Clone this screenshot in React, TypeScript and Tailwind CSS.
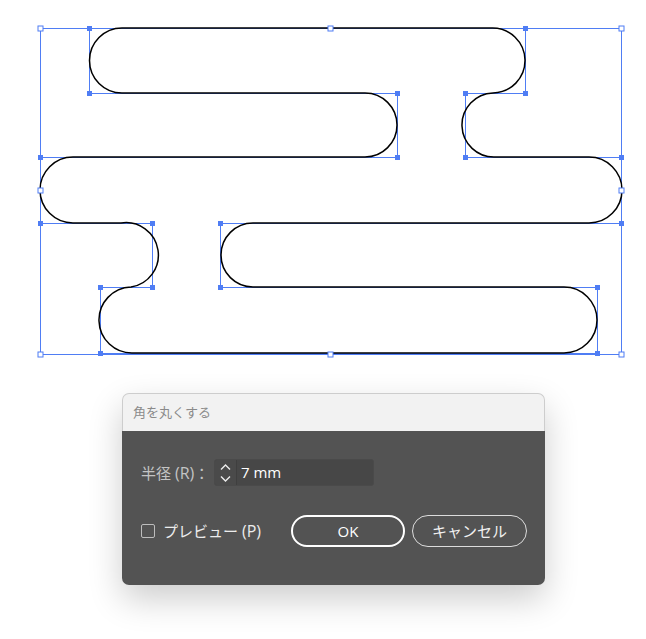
import React from 'react';

const BLUE = '#4f7df4';

// anchor points of the selected path (before the corners were rounded)
const anchors: [number, number][] = [
  [89, 28], [525, 28], [525, 93], [465, 93], [465, 157], [621, 157], [621, 223],
  [220, 223], [220, 287], [597, 287], [597, 353], [100, 353], [100, 287],
  [152, 287], [152, 223], [40, 223], [40, 157], [397, 157], [397, 93], [89, 93],
];

// bounding box handles
const boxHandles: [number, number][] = [
  [40, 28], [330, 28], [621, 28], [40, 190], [621, 190], [40, 354], [330, 354], [621, 354],
];

const roundedPath = [
  'M 122 28 L 492 28',
  'A 32.5 32.5 0 0 1 493 93',
  'A 32 32 0 0 0 495 157',
  'L 589 157 A 33 33 0 0 1 589 223',
  'L 253 223 A 32 32 0 0 0 253 287',
  'L 564 287 A 33 33 0 0 1 564 353',
  'L 133 353 A 33 33 0 0 1 131 287',
  'A 32 32 0 0 0 121 223',
  'L 73 223 A 33 33 0 0 1 73 157',
  'L 365 157 A 32 32 0 0 0 365 93',
  'L 122 93 A 32.5 32.5 0 0 1 122 28 Z',
].join(' ');

const Artwork = () => (
  <svg width="646" height="393" viewBox="0 0 646 393" className="block">
    <rect x="40.5" y="28.5" width="581" height="326" fill="none" stroke={BLUE} strokeWidth="1" />
    <polygon
      points={anchors.map(([x, y]) => `${x + 0.5},${y + 0.5}`).join(' ')}
      fill="none"
      stroke={BLUE}
      strokeWidth="1"
    />
    <path d={roundedPath} fill="none" stroke="#000" strokeWidth="1.5" />
    {anchors.map(([x, y], i) => (
      <rect key={'a' + i} x={x - 2} y={y - 2} width="5" height="5" fill={BLUE} />
    ))}
    {boxHandles.map(([x, y], i) => (
      <rect key={'b' + i} x={x - 2} y={y - 2} width="5" height="5" fill="#fff" stroke={BLUE} strokeWidth="1" />
    ))}
  </svg>
);

const Spinner = () => (
  <div className="flex h-full w-[22px] flex-col items-center justify-center gap-[6px] border-r border-[#3f3f3f] bg-[#4a4a4a]">
    <svg width="11" height="6" viewBox="0 0 11 6">
      <path d="M1 5.5 L5.5 1 L10 5.5" fill="none" stroke="#ececec" strokeWidth="1.4" />
    </svg>
    <svg width="11" height="6" viewBox="0 0 11 6">
      <path d="M1 0.5 L5.5 5 L10 0.5" fill="none" stroke="#ececec" strokeWidth="1.4" />
    </svg>
  </div>
);

export default function App() {
  return (
    <div
      className="h-[639px] w-[646px] overflow-hidden bg-white"
      style={{ fontFamily: '"Open Sans", "Noto Sans CJK JP", sans-serif' }}
    >
      <Artwork />

      <div className="ml-[122px] w-[423px] rounded-[7px] shadow-[0_14px_34px_rgba(0,0,0,0.2)]">
        {/* title bar */}
        <div className="flex h-[38px] items-center rounded-t-[7px] border border-b-0 border-[#cdcdcd] bg-[#f2f2f2] pl-[10px] text-[13px] text-[#8a8a8a]">
          角を丸くする
        </div>

        {/* body */}
        <div className="h-[154px] rounded-b-[7px] bg-[#535353] pl-[19px] pr-[18px] pt-[28px]">
          <div className="flex items-center">
            <span className="w-[73px] whitespace-nowrap text-[15px] text-[#c4c4c4]">
              半径 <span className="text-[16px]">(R)</span>：
            </span>
            <div className="flex h-[27px] w-[160px] overflow-hidden rounded-[3px] border border-[#4a4a4a] bg-[#474747]">
              <Spinner />
              <div className="flex flex-1 items-center pl-[4px] text-[15px] text-white">7 mm</div>
            </div>
          </div>

          <div className="mt-[29px] flex items-center">
            <div className="flex w-[150px] items-center">
              <span className="h-[14px] w-[14px] rounded-[2px] border border-[#bdbdbd]" />
              <span className="ml-[8px] whitespace-nowrap text-[15px] text-[#ececec]">
                プレビュー <span className="text-[16px]">(P)</span>
              </span>
            </div>
            <button className="h-[32px] w-[114px] rounded-full border-[2.5px] border-white text-[15px] text-white">
              OK
            </button>
            <button className="ml-[7px] h-[32px] w-[115px] rounded-full border-[1.5px] border-[#dcdcdc] text-[15px] text-[#f0f0f0]">
              キャンセル
            </button>
          </div>
        </div>
      </div>
    </div>
  );
}
